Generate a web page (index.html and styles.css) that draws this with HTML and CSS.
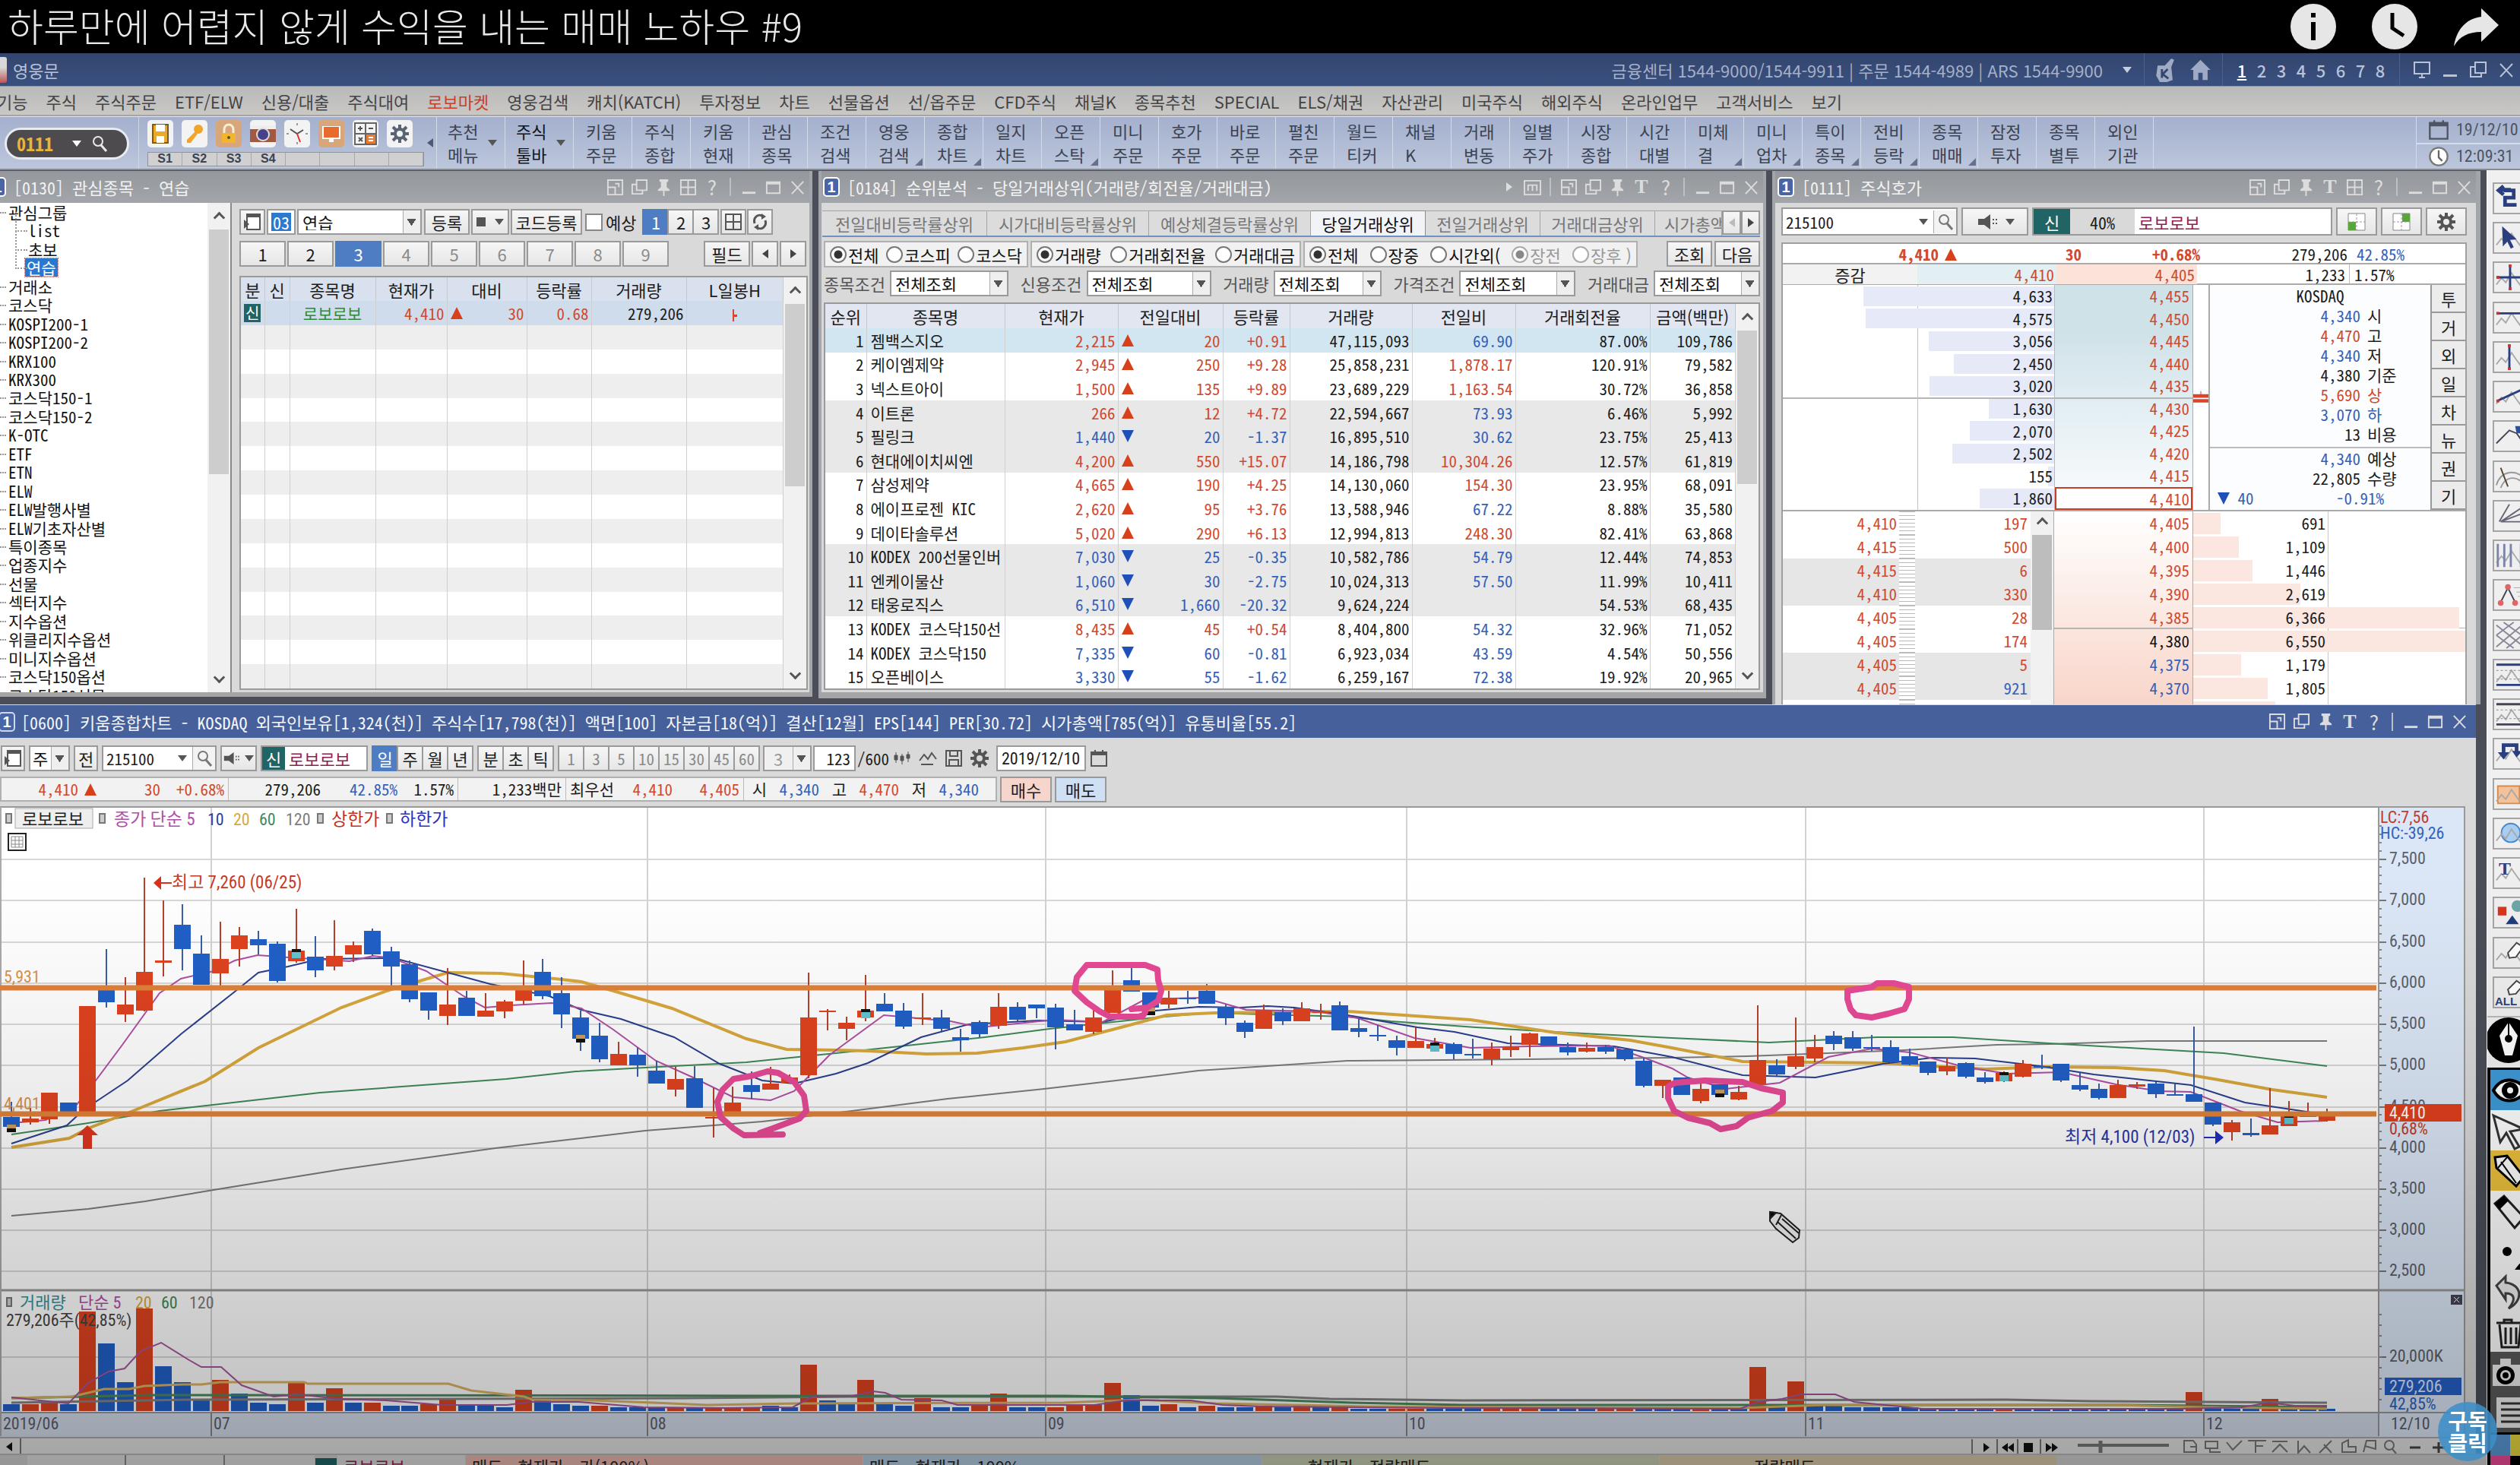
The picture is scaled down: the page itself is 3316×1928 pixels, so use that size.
FILE: index.html
```html
<!DOCTYPE html>
<html lang="ko">
<head>
<meta charset="utf-8">
<title>하루만에 어렵지 않게 수익을 내는 매매 노하우 #9</title>
<link rel="stylesheet" href="styles.css">
</head>
<body>
<svg class="defs" aria-hidden="true">
  <symbol id="dock" viewBox="0 0 24 24"><path d="M2 2h20v20H2zM2 12h10v10M12 7h5v5" fill="none" stroke="currentColor" stroke-width="2"/></symbol>
  <symbol id="copy" viewBox="0 0 24 24"><path d="M8 2h14v14H8zM8 8H2v13h14v-5" fill="none" stroke="currentColor" stroke-width="2"/></symbol>
  <symbol id="pin" viewBox="0 0 24 24"><path d="M6 1h12v3l-2 1v7l4 3v2H4v-2l4-3V5L6 4zM11 17h2v7h-2z" fill="currentColor"/></symbol>
  <symbol id="grid" viewBox="0 0 24 24"><path d="M2 2h20v20H2zM12 2v20M2 12h20" fill="none" stroke="currentColor" stroke-width="2"/></symbol>
  <symbol id="min" viewBox="0 0 24 24"><path d="M3 18h18v3H3z" fill="currentColor"/></symbol>
  <symbol id="max" viewBox="0 0 24 24"><path d="M3 5h18v15H3zM3 7h18" fill="none" stroke="currentColor" stroke-width="2"/></symbol>
  <symbol id="close" viewBox="0 0 24 24"><path d="M4 4l16 17M20 4L4 21" fill="none" stroke="currentColor" stroke-width="2"/></symbol>
  <symbol id="memo" viewBox="0 0 24 24"><path d="M1 3h22v19H1zM6 17V9h12v8M12 9v8" fill="none" stroke="currentColor" stroke-width="2"/></symbol>
  <symbol id="mag" viewBox="0 0 24 24"><circle cx="10" cy="9" r="6" fill="none" stroke="currentColor" stroke-width="2"/><path d="M14 14l7 8" stroke="currentColor" stroke-width="3"/></symbol>
  <symbol id="spk" viewBox="0 0 30 24"><path d="M1 8h8l8-6v20l-8-6H1z" fill="currentColor"/><path d="M20 8h2v2h-2zM24 8h2v2h-2zM20 13h2v2h-2zM24 13h2v2h-2z" fill="currentColor"/></symbol>
  <symbol id="gear" viewBox="0 0 24 24"><circle cx="12" cy="12" r="6" fill="none" stroke="currentColor" stroke-width="4"/><path d="M12 0v5M12 19v5M0 12h5M19 12h5M3 3l4 4M17 17l4 4M21 3l-4 4M7 17l-4 4" stroke="currentColor" stroke-width="4"/></symbol>
  <symbol id="panel" viewBox="0 0 24 24"><path d="M5 2h17v20H5z" fill="#fff" stroke="currentColor" stroke-width="2"/><path d="M5 2h17v4H5zM1 9l7 6-7 6z" fill="currentColor"/></symbol>
  <symbol id="cal" viewBox="0 0 24 24"><path d="M2 4h20v18H2z" fill="none" stroke="currentColor" stroke-width="2"/><path d="M2 4h20v4H2zM6 1h2v4H6zM16 1h2v4h-2z" fill="currentColor"/></symbol>
  <symbol id="wave" viewBox="0 0 40 40"><path d="M2 30l7-9 6 6 8-13 7 10 6 8 4-6" fill="none" stroke="#a9a9a9" stroke-width="2"/></symbol>
</svg>

<header class="video-head">
  <h1>하루만에 어렵지 않게 수익을 내는 매매 노하우 #9</h1>
  <nav class="video-actions" aria-label="동영상">
    <button aria-label="정보"><svg viewBox="0 0 60 60"><circle cx="30" cy="30" r="30" fill="#e6e6e6"/><path d="M27 12h6v6h-6zM27 24h6v24h-6z" fill="#000"/></svg></button>
    <button aria-label="나중에 볼 동영상"><svg viewBox="0 0 60 60"><circle cx="30" cy="30" r="30" fill="#e6e6e6"/><path d="M27 12v20l15 10" fill="none" stroke="#000" stroke-width="5"/></svg></button>
    <button aria-label="공유"><svg viewBox="0 0 60 60"><path d="M37 6l23 22-23 22V37C20 37 8 43 1 56 4 36 15 20 37 17z" fill="#e6e6e6"/></svg></button>
  </nav>
</header>

<div class="app-title">
  <span class="logo"></span><span class="name">영웅문</span>
  <div class="title-right">
    <span class="phones">금융센터 1544-9000/1544-9911 | 주문 1544-4989 | ARS 1544-9900</span>
    <i class="dn pale"></i>
    <span class="tgroup icons"><svg viewBox="0 0 30 36"><path d="M3 12h10l9-10 4 2-4 10 2 18-8 3H6L1 26z" fill="#9fabc4"/><path d="M9 17v12M17 17l-7 7 8 6" stroke="#33466f" stroke-width="3" fill="none"/></svg><svg viewBox="0 0 30 36"><path d="M15 4l14 14h-4v14h-7V22h-6v10H5V18H1z" fill="#9fabc4"/></svg></span>
    <span class="tgroup pages"><a href="#p1" class="on">1</a><a href="#p2">2</a><a href="#p3">3</a><a href="#p4">4</a><a href="#p5">5</a><a href="#p6">6</a><a href="#p7">7</a><a href="#p8">8</a></span>
    <span class="tgroup wins"><button aria-label="화면"><svg viewBox="0 0 24 24"><path d="M2 2h20v15H2zM8 22h8M12 17v5" fill="none" stroke="currentColor" stroke-width="2"/></svg></button><button aria-label="최소화"><svg><use href="#min"/></svg></button><button aria-label="복원"><svg><use href="#copy"/></svg></button><button aria-label="닫기"><svg><use href="#close"/></svg></button></span>
  </div>
</div>

<nav class="menu" aria-label="메뉴">
  <a href="#m">기능</a><a href="#m">주식</a><a href="#m">주식주문</a><a href="#m">ETF/ELW</a><a href="#m">신용/대출</a><a href="#m">주식대여</a><a href="#m" class="hot">로보마켓</a><a href="#m">영웅검색</a><a href="#m">캐치(KATCH)</a><a href="#m">투자정보</a><a href="#m">차트</a><a href="#m">선물옵션</a><a href="#m">선/옵주문</a><a href="#m">CFD주식</a><a href="#m">채널K</a><a href="#m">종목추천</a><a href="#m">SPECIAL</a><a href="#m">ELS/채권</a><a href="#m">자산관리</a><a href="#m">미국주식</a><a href="#m">해외주식</a><a href="#m">온라인업무</a><a href="#m">고객서비스</a><a href="#m">보기</a>
</nav>

<div class="tools">
  <div class="code-area"><div class="pill"><input aria-label="화면번호" value="0111"><i class="dn white"></i><button aria-label="찾기"><svg><use href="#mag"/></svg></button></div></div>
  <div class="quick">
    <div class="quick-icons">
      <button aria-label="저장"><svg viewBox="0 0 34 34"><path d="M7 5h20v24H7z" fill="#e9a92c" stroke="#7c5a18" stroke-width="2"/><path d="M11 5h12v9H11zM12 20h10v9H12z" fill="#fff"/></svg></button>
      <button aria-label="열쇠"><svg viewBox="0 0 34 34"><circle cx="22" cy="11" r="6" fill="#f0a42a"/><path d="M18 14l3 3-9 12H7v-4z" fill="#f0a42a"/></svg></button>
      <button aria-label="잠금" class="tan"><svg viewBox="0 0 34 34"><path d="M11 16v-5a6 6 0 0 1 12 0v5" fill="none" stroke="#f5f0d8" stroke-width="3"/><path d="M8 16h18v13H8z" fill="#f2b52c"/><circle cx="17" cy="22" r="2" fill="#553"/></svg></button>
      <button aria-label="화면 캡처"><svg viewBox="0 0 34 34"><path d="M0 6h34v22H0z" fill="#a05a44"/><path d="M0 6h34v5H0z" fill="#eee"/><circle cx="17" cy="18" r="9" fill="#ddd"/><circle cx="17" cy="18" r="7" fill="#46428a"/></svg></button>
      <button aria-label="시간"><svg viewBox="0 0 34 34"><path d="M8 11l9 6 8-5" stroke="#555" stroke-width="2" fill="none"/><path d="M17 17l4 11" stroke="#d33" stroke-width="2"/><path d="M17 3v3M17 28v3M3 17h3M28 17h3" stroke="#999" stroke-width="2"/></svg></button>
      <button aria-label="모니터" class="tan"><svg viewBox="0 0 34 34"><path d="M5 7h24v17H5z" fill="#fff"/><path d="M7 8h20v14H7z" fill="#e86a2c"/><path d="M14 24h6v4h-6z" fill="#fff"/></svg></button>
      <button aria-label="계산기"><svg viewBox="0 0 34 34"><path d="M2 2h30v30H2z" fill="#666"/><path d="M4 4h12v12H4zM18 4h12v12H18zM4 18h12v12H4z" fill="#f4f4f4"/><path d="M18 18h12v12H18z" fill="#e87a35"/><path d="M7 10h6M10 7v6M21 10h6M8 22l5 5M13 22l-5 5" stroke="#555" stroke-width="2"/><path d="M21 22h6M21 26h6" stroke="#fff" stroke-width="2"/></svg></button>
      <button aria-label="설정"><svg class="cog"><use href="#gear"/></svg></button>
    </div>
    <div class="slots"><span>S1</span><span>S2</span><span>S3</span><span>S4</span><span></span><span></span><span></span><span></span></div>
  </div>
  <i class="lf"></i>
  <button class="tool wide">추천<br>메뉴<i class="dn"></i></button><button class="tool wide dark">주식<br>툴바<i class="dn"></i></button><button class="tool">키움<br>주문</button><button class="tool">주식<br>종합</button><button class="tool">키움<br>현재</button><button class="tool">관심<br>종목</button><button class="tool">조건<br>검색</button><button class="tool more">영웅<br>검색</button><button class="tool more">종합<br>차트</button><button class="tool">일지<br>차트</button><button class="tool more">오픈<br>스탁</button><button class="tool">미니<br>주문</button><button class="tool">호가<br>주문</button><button class="tool">바로<br>주문</button><button class="tool">펼친<br>주문</button><button class="tool">월드<br>티커</button><button class="tool">채널<br>K</button><button class="tool">거래<br>변동</button><button class="tool">일별<br>주가</button><button class="tool">시장<br>종합</button><button class="tool">시간<br>대별</button><button class="tool more">미체<br>결</button><button class="tool more">미니<br>업차</button><button class="tool more">특이<br>종목</button><button class="tool more">전비<br>등락</button><button class="tool more">종목<br>매매</button><button class="tool">잠정<br>투자</button><button class="tool">종목<br>별투</button><button class="tool">외인<br>기관</button>
  <div class="clock"><div><svg><use href="#cal"/></svg>19/12/10</div><div><svg viewBox="0 0 24 24"><circle cx="12" cy="12" r="10" fill="#fff" stroke="#777" stroke-width="2"/><path d="M12 5v8l4 4" fill="none" stroke="#666" stroke-width="2"/></svg>12:09:31</div></div>
</div>

<div class="workspace">
<main class="mdi">
 <div class="top-windows">
  <section class="win w1">
    <header class="wt"><b class="num">1</b><h2>[0130] 관심종목 - 연습</h2><div class="ctl"><button aria-label="도킹"><svg><use href="#dock"/></svg></button><button aria-label="복사"><svg><use href="#copy"/></svg></button><button aria-label="고정"><svg><use href="#pin"/></svg></button><button aria-label="분할"><svg><use href="#grid"/></svg></button><button>?</button><i></i><button aria-label="최소화"><svg><use href="#min"/></svg></button><button aria-label="최대화"><svg><use href="#max"/></svg></button><button aria-label="닫기"><svg><use href="#close"/></svg></button></div></header>
    <div class="w1-body">
      <div class="tree-wrap">
        <ul class="tree"><li>관심그룹</li><li class="sub">list</li><li class="sub">초보</li><li class="sub"><mark>연습</mark></li><li>거래소</li><li>코스닥</li><li>KOSPI200-1</li><li>KOSPI200-2</li><li>KRX100</li><li>KRX300</li><li>코스닥150-1</li><li>코스닥150-2</li><li>K-OTC</li><li>ETF</li><li>ETN</li><li>ELW</li><li>ELW발행사별</li><li>ELW기초자산별</li><li>특이종목</li><li>업종지수</li><li>선물</li><li>섹터지수</li><li>지수옵션</li><li>위클리지수옵션</li><li>미니지수옵션</li><li>코스닥150옵션</li><li>코스닥150선물</li></ul>
        <div class="sb"><i class="cu"></i><span class="thumb t-tree"></span><i class="cd"></i></div>
      </div>
      <div class="w1-main">
        <div class="bar">
          <button class="b w34" aria-label="목록"><svg><use href="#panel"/></svg></button>
          <input class="code03" aria-label="그룹 번호" value="03">
          <select class="sel w164" aria-label="관심그룹"><option>연습</option></select>
          <button class="b w60">등록</button><button class="b w50"><i class="sq"></i><i class="dn"></i></button><button class="b w94">코드등록</button>
          <label class="chk"><input type="checkbox">예상</label>
          <div class="seg"><button class="b on">1</button><button class="b">2</button><button class="b">3</button></div>
          <button class="b w34" aria-label="표"><svg><use href="#grid"/></svg></button><button class="b w34 nogap" aria-label="새로고침"><svg viewBox="0 0 24 24"><path d="M5 14a7 8 0 0 1 11-9M19 10a7 8 0 0 1-11 9" fill="none" stroke="currentColor" stroke-width="3"/><path d="M14 1l6 4-6 4zM10 15l-6 4 6 4z" fill="currentColor"/></svg></button>
        </div>
        <div class="bar nums"><button class="b">1</button><button class="b">2</button><button class="b on">3</button><button class="b off">4</button><button class="b off">5</button><button class="b off">6</button><button class="b off">7</button><button class="b off">8</button><button class="b off">9</button><button class="b field">필드</button><button class="b w34" aria-label="이전"><i class="lf"></i></button><button class="b w34" aria-label="다음"><i class="rt"></i></button></div>
        <div class="tbl-wrap">
          <table class="t1"><colgroup><col class="c31"><col class="c33"><col class="c113"><col class="c94"><col class="c105"><col class="c85"><col class="c125"><col></colgroup>
          <thead><tr><th>분</th><th>신</th><th>종목명</th><th>현재가</th><th>대비</th><th>등락률</th><th>거래량</th><th>L일봉H</th></tr></thead>
          <tbody><tr class="cur"><td class="c"><b class="sin">신</b></td><td></td><td class="c green">로보로보</td><td class="up">4,410</td><td class="up"><i class="tu"></i>30</td><td class="up">0.68</td><td>279,206</td><td class="c up"><i class="mini"></i></td></tr>
          <tr><td></td><td></td><td></td><td></td><td></td><td></td><td></td><td></td></tr><tr><td></td><td></td><td></td><td></td><td></td><td></td><td></td><td></td></tr><tr><td></td><td></td><td></td><td></td><td></td><td></td><td></td><td></td></tr><tr><td></td><td></td><td></td><td></td><td></td><td></td><td></td><td></td></tr><tr><td></td><td></td><td></td><td></td><td></td><td></td><td></td><td></td></tr><tr><td></td><td></td><td></td><td></td><td></td><td></td><td></td><td></td></tr><tr><td></td><td></td><td></td><td></td><td></td><td></td><td></td><td></td></tr><tr><td></td><td></td><td></td><td></td><td></td><td></td><td></td><td></td></tr><tr><td></td><td></td><td></td><td></td><td></td><td></td><td></td><td></td></tr><tr><td></td><td></td><td></td><td></td><td></td><td></td><td></td><td></td></tr><tr><td></td><td></td><td></td><td></td><td></td><td></td><td></td><td></td></tr><tr><td></td><td></td><td></td><td></td><td></td><td></td><td></td><td></td></tr><tr><td></td><td></td><td></td><td></td><td></td><td></td><td></td><td></td></tr><tr><td></td><td></td><td></td><td></td><td></td><td></td><td></td><td></td></tr><tr><td></td><td></td><td></td><td></td><td></td><td></td><td></td><td></td></tr></tbody></table>
          <div class="sb"><i class="cu"></i><span class="thumb t-w1"></span><i class="cd"></i></div>
        </div>
      </div>
    </div>
  </section>

  <section class="win w2">
    <header class="wt"><b class="num">1</b><h2>[0184] 순위분석 - 당일거래상위(거래량/회전율/거래대금)</h2><div class="ctl"><i class="rt pale"></i><button aria-label="메모"><svg><use href="#memo"/></svg></button><i></i><button aria-label="도킹"><svg><use href="#dock"/></svg></button><button aria-label="복사"><svg><use href="#copy"/></svg></button><button aria-label="고정"><svg><use href="#pin"/></svg></button><button class="serif">T</button><button>?</button><i></i><button aria-label="최소화"><svg><use href="#min"/></svg></button><button aria-label="최대화"><svg><use href="#max"/></svg></button><button aria-label="닫기"><svg><use href="#close"/></svg></button></div></header>
    <div class="w2-body">
      <div class="tabs"><button class="tab">전일대비등락률상위</button><button class="tab">시가대비등락률상위</button><button class="tab">예상체결등락률상위</button><button class="tab on">당일거래상위</button><button class="tab">전일거래상위</button><button class="tab">거래대금상위</button><button class="tab last">시가총액</button><button class="b w25" aria-label="이전 탭"><i class="lf faint"></i></button><button class="b w25" aria-label="다음 탭"><i class="rt"></i></button></div>
      <div class="radios">
        <fieldset class="f269"><label><input type="radio" name="m" checked>전체</label><label><input type="radio" name="m">코스피</label><label><input type="radio" name="m">코스닥</label></fieldset>
        <fieldset class="f356"><label><input type="radio" name="k" checked>거래량</label><label><input type="radio" name="k">거래회전율</label><label><input type="radio" name="k">거래대금</label></fieldset>
        <fieldset class="f440"><label><input type="radio" name="s" checked>전체</label><label><input type="radio" name="s">장중</label><label><input type="radio" name="s">시간외(</label><label class="dis"><input type="radio" name="x" checked disabled>장전</label><label class="dis"><input type="radio" name="x" disabled>장후 )</label></fieldset>
        <button class="b w60 push">조회</button><button class="b w60">다음</button>
      </div>
      <div class="filters"><label>종목조건<select class="sel w156"><option>전체조회</option></select></label><label>신용조건<select class="sel w164"><option>전체조회</option></select></label><label>거래량<select class="sel w142"><option>전체조회</option></select></label><label>가격조건<select class="sel w153"><option>전체조회</option></select></label><label>거래대금<select class="sel w140"><option>전체조회</option></select></label></div>
      <div class="tbl-wrap t2w">
        <table class="t2"><colgroup><col class="c54"><col class="c182"><col class="c149"><col class="c138"><col class="c88"><col class="c161"><col class="c136"><col class="c177"><col></colgroup>
        <thead><tr><th>순위</th><th>종목명</th><th>현재가</th><th>전일대비</th><th>등락률</th><th>거래량</th><th>전일비</th><th>거래회전율</th><th>금액(백만)</th></tr></thead>
        <tbody>
        <tr class="cur"><td>1</td><td>젬백스지오</td><td class="up">2,215</td><td class="up"><i class="tu"></i>20</td><td class="up">+0.91</td><td>47,115,093</td><td class="dw">69.90</td><td>87.00%</td><td>109,786</td></tr>
        <tr><td>2</td><td>케이엠제약</td><td class="up">2,945</td><td class="up"><i class="tu"></i>250</td><td class="up">+9.28</td><td>25,858,231</td><td class="up">1,878.17</td><td>120.91%</td><td>79,582</td></tr>
        <tr><td>3</td><td>넥스트아이</td><td class="up">1,500</td><td class="up"><i class="tu"></i>135</td><td class="up">+9.89</td><td>23,689,229</td><td class="up">1,163.54</td><td>30.72%</td><td>36,858</td></tr>
        <tr class="g"><td>4</td><td>이트론</td><td class="up">266</td><td class="up"><i class="tu"></i>12</td><td class="up">+4.72</td><td>22,594,667</td><td class="dw">73.93</td><td>6.46%</td><td>5,992</td></tr>
        <tr class="g"><td>5</td><td>필링크</td><td class="dw">1,440</td><td class="dw"><i class="td"></i>20</td><td class="dw">-1.37</td><td>16,895,510</td><td class="dw">30.62</td><td>23.75%</td><td>25,413</td></tr>
        <tr class="g"><td>6</td><td>현대에이치씨엔</td><td class="up">4,200</td><td class="up"><i class="tu"></i>550</td><td class="up">+15.07</td><td>14,186,798</td><td class="up">10,304.26</td><td>12.57%</td><td>61,819</td></tr>
        <tr><td>7</td><td>삼성제약</td><td class="up">4,665</td><td class="up"><i class="tu"></i>190</td><td class="up">+4.25</td><td>14,130,060</td><td class="up">154.30</td><td>23.95%</td><td>68,091</td></tr>
        <tr><td>8</td><td>에이프로젠 KIC</td><td class="up">2,620</td><td class="up"><i class="tu"></i>95</td><td class="up">+3.76</td><td>13,588,946</td><td class="dw">67.22</td><td>8.88%</td><td>35,580</td></tr>
        <tr><td>9</td><td>데이타솔루션</td><td class="up">5,020</td><td class="up"><i class="tu"></i>290</td><td class="up">+6.13</td><td>12,994,813</td><td class="up">248.30</td><td>82.41%</td><td>63,868</td></tr>
        <tr class="g"><td>10</td><td>KODEX 200선물인버</td><td class="dw">7,030</td><td class="dw"><i class="td"></i>25</td><td class="dw">-0.35</td><td>10,582,786</td><td class="dw">54.79</td><td>12.44%</td><td>74,853</td></tr>
        <tr class="g"><td>11</td><td>엔케이물산</td><td class="dw">1,060</td><td class="dw"><i class="td"></i>30</td><td class="dw">-2.75</td><td>10,024,313</td><td class="dw">57.50</td><td>11.99%</td><td>10,411</td></tr>
        <tr class="g"><td>12</td><td>태웅로직스</td><td class="dw">6,510</td><td class="dw"><i class="td"></i>1,660</td><td class="dw">-20.32</td><td>9,624,224</td><td></td><td>54.53%</td><td>68,435</td></tr>
        <tr><td>13</td><td>KODEX 코스닥150선</td><td class="up">8,435</td><td class="up"><i class="tu"></i>45</td><td class="up">+0.54</td><td>8,404,800</td><td class="dw">54.32</td><td>32.96%</td><td>71,052</td></tr>
        <tr><td>14</td><td>KODEX 코스닥150</td><td class="dw">7,335</td><td class="dw"><i class="td"></i>60</td><td class="dw">-0.81</td><td>6,923,034</td><td class="dw">43.59</td><td>4.54%</td><td>50,556</td></tr>
        <tr><td>15</td><td>오픈베이스</td><td class="dw">3,330</td><td class="dw"><i class="td"></i>55</td><td class="dw">-1.62</td><td>6,259,167</td><td class="dw">72.38</td><td>19.92%</td><td>20,965</td></tr>
        </tbody></table>
        <div class="sb"><i class="cu"></i><span class="thumb t-w2"></span><i class="cd"></i></div>
      </div>
    </div>
  </section>

  <section class="win w3">
    <header class="wt"><b class="num">1</b><h2>[0111] 주식호가</h2><div class="ctl"><button aria-label="도킹"><svg><use href="#dock"/></svg></button><button aria-label="복사"><svg><use href="#copy"/></svg></button><button aria-label="고정"><svg><use href="#pin"/></svg></button><button class="serif">T</button><button aria-label="분할"><svg><use href="#grid"/></svg></button><button>?</button><i></i><button aria-label="최소화"><svg><use href="#min"/></svg></button><button aria-label="최대화"><svg><use href="#max"/></svg></button><button aria-label="닫기"><svg><use href="#close"/></svg></button></div></header>
    <div class="w3-body">
      <div class="bar">
        <div class="combo w232"><input aria-label="종목코드" value="215100"><i class="dn"></i><button aria-label="종목 찾기"><svg><use href="#mag"/></svg></button></div>
        <button class="b w88" aria-label="소리"><svg class="spk"><use href="#spk"/></svg><i class="dn"></i></button>
        <div class="stock"><b class="sin">신</b><span class="pct">40%</span><span class="nm">로보로보</span></div>
        <button class="b w54" aria-label="매도 배치"><svg viewBox="0 0 24 24"><path d="M1 1h22v22H1z" fill="#fff" stroke="#888"/><path d="M1 12h10v11H1z" fill="#5aa63a"/><path d="M12 1v22M1 12h22" stroke="#999" stroke-dasharray="3 2"/></svg></button><button class="b w54" aria-label="매수 배치"><svg viewBox="0 0 24 24"><path d="M1 1h22v22H1z" fill="#fff" stroke="#888"/><path d="M13 1h10v11H13z" fill="#5aa63a"/><path d="M12 1v22M1 12h22" stroke="#999" stroke-dasharray="3 2"/></svg></button><button class="b w54" aria-label="설정"><svg><use href="#gear"/></svg></button>
      </div>
      <div class="quote">
        <div class="q1"><b class="up r">4,410<i class="tu in"></i></b><b class="up r">30</b><b class="up r">+0.68%</b><span class="r">279,206</span><span class="dw l">42.85%</span></div>
        <div class="q2"><span class="chg">증감</span><span class="up r ask">4,410</span><span class="up r bid">4,405</span><span class="r">1,233</span><span class="l">1.57%</span></div>
        <div class="asks">
          <div class="ask-q"><span style="--w:251px">4,633</span><span style="--w:248px">4,575</span><span style="--w:165px">3,056</span><span style="--w:132px">2,450</span><span style="--w:164px">3,020</span><span style="--w:86px">1,630</span><span style="--w:111px">2,070</span><span style="--w:134px">2,502</span><span style="--w:8px">155</span><span style="--w:98px">1,860</span></div>
          <div class="ask-p"><span>4,455</span><span>4,450</span><span>4,445</span><span>4,440</span><span>4,435</span><span>4,430</span><span>4,425</span><span>4,420</span><span>4,415</span><span class="now">4,410</span></div>
          <div class="day"><svg viewBox="0 0 22 297"><path d="M11 140v6" stroke="#b33"/><path d="M0 147h22M0 154h22" stroke="#d8452a" stroke-width="5"/></svg></div>
          <dl class="facts"><dt class="mk">KOSDAQ</dt><dd class="dw">4,340</dd><dt>시</dt><dd class="up">4,470</dd><dt>고</dt><dd class="dw">4,340</dd><dt>저</dt><dd>4,380</dd><dt>기준</dt><dd class="up">5,690</dd><dt class="up">상</dt><dd class="dw">3,070</dd><dt class="dw">하</dt><dd>13</dd><dt>비용</dt><dd class="dw sep">4,340</dd><dt class="sep">예상</dt><dd>22,805</dd><dt>수량</dt><dd class="dw diff"><span><i class="td"></i> 40</span><span>-0.91%</span></dd></dl>
          <div class="side"><button>투</button><button>거</button><button>외</button><button>일</button><button>차</button><button>뉴</button><button>권</button><button>기</button></div>
        </div>
        <div class="bids">
          <div class="ticks"><div><span>4,410</span><span>197</span></div><div><span>4,415</span><span>500</span></div><div class="g"><span>4,415</span><span>6</span></div><div class="g"><span>4,410</span><span>330</span></div><div><span>4,405</span><span>28</span></div><div><span>4,405</span><span>174</span></div><div class="g"><span>4,405</span><span>5</span></div><div class="g"><span>4,405</span><span class="dw">921</span></div><div><span>4,410</span><span>10</span></div></div>
          <div class="sb"><i class="cu"></i><span class="thumb t-w3"></span></div>
          <div class="bid-p"><span>4,405</span><span>4,400</span><span>4,395</span><span>4,390</span><span>4,385</span><span class="k">4,380</span><span class="dw">4,375</span><span class="dw">4,370</span><span class="dw"></span></div>
          <div class="bid-q"><span style="--w:36px">691</span><span style="--w:60px">1,109</span><span style="--w:78px">1,446</span><span style="--w:141px">2,619</span><span style="--w:350px">6,366</span><span style="--w:359px">6,550</span><span style="--w:63px">1,179</span><span style="--w:98px">1,805</span><span style="--w:108px"></span></div>
        </div>
      </div>
    </div>
  </section>
 </div>

 <section class="win chart">
  <header class="wt"><b class="num">1</b><h2>[0600] 키움종합차트 - KOSDAQ 외국인보유[1,324(천)] 주식수[17,798(천)] 액면[100] 자본금[18(억)] 결산[12월] EPS[144] PER[30.72] 시가총액[785(억)] 유통비율[55.2]</h2><div class="ctl"><button aria-label="도킹"><svg><use href="#dock"/></svg></button><button aria-label="복사"><svg><use href="#copy"/></svg></button><button aria-label="고정"><svg><use href="#pin"/></svg></button><button class="serif">T</button><button>?</button><i></i><button aria-label="최소화"><svg><use href="#min"/></svg></button><button aria-label="최대화"><svg><use href="#max"/></svg></button><button aria-label="닫기"><svg><use href="#close"/></svg></button></div></header>
  <div class="chart-body">
   <div class="bar">
    <button class="b w32" aria-label="목록"><svg><use href="#panel"/></svg></button>
    <select class="sel w54" aria-label="구분"><option>주</option></select>
    <button class="b w32">전</button>
    <div class="combo w151"><input aria-label="종목코드" value="215100"><i class="dn"></i><button aria-label="종목 찾기"><svg><use href="#mag"/></svg></button></div>
    <button class="b w48" aria-label="소리"><svg><use href="#spk"/></svg><i class="dn"></i></button>
    <div class="stock small"><b class="sin">신</b><span class="nm">로보로보</span></div>
    <div class="seg"><button class="b on">일</button><button class="b">주</button><button class="b">월</button><button class="b">년</button></div>
    <div class="seg"><button class="b">분</button><button class="b">초</button><button class="b">틱</button></div>
    <div class="seg offs"><button class="b">1</button><button class="b">3</button><button class="b">5</button><button class="b">10</button><button class="b">15</button><button class="b">30</button><button class="b">45</button><button class="b">60</button></div>
    <select class="sel w64 off" aria-label="간격" disabled><option>3</option></select>
    <label class="count"><input value="123" aria-label="봉 개수">/600</label>
    <button class="plain" aria-label="봉차트"><svg viewBox="0 0 24 24"><path d="M4 4v14M2 8h4v6H2zM12 6v14M10 9h4v6h-4zM20 3v14M18 7h4v5h-4z" fill="#555" stroke="#555"/></svg></button><button class="plain" aria-label="선차트"><svg viewBox="0 0 24 24"><path d="M1 15l6-8 5 6 5-8 6 8M3 20h16" fill="none" stroke="#555" stroke-width="2"/></svg></button><button class="plain" aria-label="저장"><svg viewBox="0 0 24 24"><path d="M2 2h20v20H2zM7 2v7h10V2M6 22v-8h12v8" fill="none" stroke="#555" stroke-width="2"/></svg></button><button class="plain" aria-label="설정"><svg><use href="#gear"/></svg></button>
    <input class="date" aria-label="날짜" value="2019/12/10"><button class="plain" aria-label="달력"><svg><use href="#cal"/></svg></button>
   </div>
   <div class="info">
    <div class="info-box"><span class="up i130">4,410<i class="tu in"></i></span><span class="up i84">30</span><span class="up i84">+0.68%</span><span class="i127 ln">279,206</span><span class="dw i101">42.85%</span><span class="i74">1.57%</span><span class="i142 ln">1,233백만</span><span class="i70 ln">최우선</span><span class="up i77">4,410</span><span class="up i88">4,405</span><span class="i36 ln">시</span><span class="dw i70">4,340</span><span class="i36">고</span><span class="up i70">4,470</span><span class="i36">저</span><span class="dw i70">4,340</span></div>
    <button class="b buy">매수</button><button class="b sell">매도</button>
   </div>
   <svg id="plot" viewBox="0 1061 3244 830" role="img" aria-label="로보로보 일봉 차트"></svg>
   <div class="scroll"><i class="lf blk"></i><span class="track"></span>
     <svg viewBox="0 0 660 22"><path d="M11 1v20M44 1v20M71 1v20M101 1v20" stroke="#777" stroke-width="2"/><path d="M26 6l8 6-8 6zM58 6l-8 6 8 6zM66 6l-8 6 8 6zM79 6h12v12H79zM108 6l8 6-8 6zM116 6l8 6-8 6z" fill="#111"/><path d="M150 9h120" stroke="#777" stroke-width="4"/><path d="M180 3v16" stroke="#777" stroke-width="5"/><g fill="none" stroke="#777" stroke-width="2"><path d="M290 18V3h12l4 5v10zM298 11h8M318 4h16v9h-16zM324 13v5h14M346 5l8 10 12-12M374 3h24M384 3v16M384 10h10M406 4h20M406 18l10-10 10 10M440 3v16l8-9 8 9M468 19l16-16M474 8l10 11M498 18V6l8-4v9h10v7zM526 18l4-15h12v11l-14-4"/><circle cx="560" cy="9" r="6"/><path d="M564 14l5 6"/></g><path d="M587 12h14M617 12h16M625 5v14" stroke="#444" stroke-width="3"/></svg>
   </div>
  </div>
 </section>
 <div class="dockbar"><span class="d-ctl"></span><b class="sin"></b><span class="d-name">로보로보</span><span class="d-red">매도 - 현재가 - 가(100%)</span><span class="d-blue">매도 - 현재가 - 100%</span><span class="d-green">현재가 - 전량매도</span><span class="d-tan">전량매도</span></div>
</main>

<aside class="palette" aria-label="그리기 도구">
 <div class="draw">
  <button aria-label="연결"><svg viewBox="0 0 40 40"><path d="M22 8H8M12 3L5 9l7 6M12 9h14v10H14v10h16" fill="none" stroke="#2a3f80" stroke-width="5"/></svg></button>
  <button aria-label="선택"><svg><use href="#wave"/></svg><svg viewBox="0 0 40 40"><path d="M10 4l20 18-9 1 5 10-4 2-5-10-6 7z" fill="#2a3f80"/></svg></button>
  <button aria-label="십자선"><svg><use href="#wave"/></svg><svg viewBox="0 0 40 40"><path d="M3 20h37M21 3v34" stroke="#2a3f80" stroke-width="3"/><path d="M2 18h4v4H2zM19 2h4v4h-4zM19 34h4v4h-4z" fill="#c33"/></svg></button>
  <button aria-label="수평선"><svg><use href="#wave"/></svg><svg viewBox="0 0 40 40"><path d="M3 14h37" stroke="#2a3f80" stroke-width="3"/><path d="M2 12h4v4H2z" fill="#c33"/></svg></button>
  <button aria-label="수직선"><svg><use href="#wave"/></svg><svg viewBox="0 0 40 40"><path d="M20 3v34" stroke="#2a3f80" stroke-width="3"/><path d="M18 2h4v4h-4zM18 34h4v4h-4z" fill="#c33"/></svg></button>
  <button aria-label="추세선"><svg><use href="#wave"/></svg><svg viewBox="0 0 40 40"><path d="M3 26L38 10" stroke="#2a3f80" stroke-width="3"/><path d="M2 24h4v4H2z" fill="#c33"/></svg></button>
  <button aria-label="자유선"><svg viewBox="0 0 40 40"><path d="M2 30L20 12l10 4 10 14" fill="none" stroke="#445" stroke-width="2"/><path d="M28 6h12v10H30z" fill="#2a4fa0"/></svg></button>
  <button aria-label="원호"><svg viewBox="0 0 40 40"><path d="M2 32c6-20 26-22 38-10M8 36c6-16 20-18 32-6" fill="none" stroke="#999" stroke-width="2"/><path d="M8 8l10 26" stroke="#543" stroke-width="2"/></svg></button>
  <button aria-label="부채꼴"><svg viewBox="0 0 40 40"><path d="M6 28L20 4M8 28L38 8M8 28L40 16M8 28h32" stroke="#667" stroke-width="2"/></svg></button>
  <button aria-label="시간대"><svg><use href="#wave"/></svg><svg viewBox="0 0 40 40"><path d="M4 4v32M13 4v32M22 4v32M36 4v32" stroke="#7c84a8" stroke-width="3"/></svg></button>
  <button aria-label="파동"><svg viewBox="0 0 40 40"><path d="M8 30L18 10l10 20" fill="none" stroke="#445" stroke-width="2"/><path d="M26 10h14M30 16h10M32 22h8" stroke="#aaa"/><g fill="#d66"><circle cx="8" cy="31" r="4"/><circle cx="18" cy="9" r="4"/><circle cx="28" cy="31" r="4"/></g></svg></button>
  <button aria-label="격자"><svg viewBox="0 0 40 40"><path d="M2 6l38 30M2 20l24 18M12 2l28 20M2 36L40 4M2 20L26 2M16 38l24-20" stroke="#889" stroke-width="2"/></svg></button>
  <button aria-label="구간"><svg><use href="#wave"/></svg><svg viewBox="0 0 40 40"><path d="M2 6h38M2 34h38" stroke="#2a3f80" stroke-width="3"/><path d="M2 14h38M2 26h38" stroke="#888" stroke-dasharray="3 3"/></svg></button>
  <button aria-label="사분할"><svg><use href="#wave"/></svg><svg viewBox="0 0 40 40"><path d="M2 6h38M2 34h38" stroke="#445" stroke-width="3"/><path d="M2 14h38M2 26h38" stroke="#888" stroke-dasharray="3 3"/></svg></button>
  <button aria-label="되돌림"><svg><use href="#wave"/></svg><svg viewBox="0 0 40 40"><path d="M12 24V8h18v12" fill="none" stroke="#2a3f80" stroke-width="5"/><path d="M4 18h16l-8 10zM24 16h14l-8 9z" fill="#2a3f80"/></svg></button>
  <button aria-label="사각형"><svg viewBox="0 0 40 40"><path d="M4 9h30v24H4z" fill="#f3c29b" stroke="#d98a4a" stroke-width="2"/></svg><svg><use href="#wave"/></svg></button>
  <button aria-label="원"><svg viewBox="0 0 40 40"><circle cx="22" cy="19" r="13" fill="#a9cdf0" stroke="#4a86c8" stroke-width="2"/></svg><svg><use href="#wave"/></svg></button>
  <button aria-label="글자"><svg><use href="#wave"/></svg><span>T</span></button>
  <button aria-label="도형"><svg viewBox="0 0 40 40"><path d="M4 12h12v12H4z" fill="#d8351c"/><circle cx="31" cy="11" r="8" fill="#6ba5a5"/><path d="M24 24l9 12H15z" fill="#1e3c80"/></svg></button>
  <button aria-label="지우개"><svg><use href="#wave"/></svg><svg viewBox="0 0 40 40"><path d="M18 20L30 6l9 6-10 14-9 1z" fill="#fff" stroke="#444" stroke-width="2"/></svg></button>
  <button aria-label="모두 지우기"><svg viewBox="0 0 40 40"><path d="M18 16L30 4l9 6-10 12-9 1z" fill="#fff" stroke="#444" stroke-width="2"/></svg><small>ALL</small></button>
 </div>
 <div class="pen"><svg viewBox="0 0 60 60"><circle cx="30" cy="30" r="30" fill="#000"/><path d="M30 6l12 18-7 26H25l-7-26z" fill="#fff"/><circle cx="30" cy="28" r="5" fill="#000"/><path d="M30 6v20" stroke="#000" stroke-width="2"/></svg></div>
 <div class="marker">
  <button class="blue" aria-label="보기"><svg viewBox="0 0 40 52"><path d="M4 26c10-18 30-18 44 0-14 18-34 18-44 0z" fill="#fff" stroke="#000" stroke-width="4"/><circle cx="26" cy="26" r="11"/><circle cx="26" cy="26" r="4" fill="#fff"/></svg></button>
  <button aria-label="커서"><svg viewBox="0 0 40 52"><path d="M4 6l40 18-18 3 12 20-6 3-11-21-8 12z" fill="#fff" stroke="#333" stroke-width="3"/></svg></button>
  <button class="gold" aria-label="연필"><svg viewBox="0 0 40 52"><path d="M6 8l16-2 22 28-10 12L8 22z" fill="#fff" stroke="#000" stroke-width="3"/><path d="M14 14l20 28M22 8L10 22" stroke="#000" stroke-width="2"/></svg></button>
  <button aria-label="지우개"><svg viewBox="0 0 40 52"><path d="M6 16L18 6l26 28-12 14z" fill="#fff" stroke="#222" stroke-width="3"/><path d="M6 16L18 6l6 6-12 12z"/></svg></button>
  <button aria-label="굵기"><svg viewBox="0 0 40 52"><circle cx="22" cy="26" r="6"/><path d="M40 40v10H32z"/></svg></button>
  <button aria-label="실행 취소"><svg viewBox="0 0 40 52"><path d="M8 18L20 6v8c22 2 24 24 4 34 10-12 8-20-4-20v8z" fill="#eee" stroke="#444" stroke-width="3"/></svg></button>
  <button aria-label="휴지통"><svg viewBox="0 0 40 52"><path d="M8 14h36M18 14v-4h10v4M12 16l3 30h22l3-30M20 20v22M27 20v22M34 20v22" fill="none" stroke="#222" stroke-width="3"/></svg></button>
  <button class="ink" aria-label="사진"><svg viewBox="0 0 40 52"><path d="M3 16h10V8h14v8h20v28H3z" fill="#eee"/><circle cx="20" cy="30" r="12"/><circle cx="20" cy="30" r="7" fill="#eee"/><circle cx="20" cy="30" r="4"/></svg></button>
  <button class="ink" aria-label="목록"><svg viewBox="0 0 40 52"><path d="M8 6h36v40H8z" fill="#eee"/><path d="M14 14h26M14 22h26M14 30h26M14 38h26" stroke="#333" stroke-width="3"/></svg></button>
  <div class="swatches"><i></i><i></i><i></i><i></i></div>
 </div>
</aside>
</div>

<div class="shade"></div>
<a class="subscribe" href="#subscribe">구독<br>클릭</a>
<script src="chart.js"></script>
</body>
</html>
```
FILE: styles.css
```css
*{box-sizing:border-box}
:root{--ui:"Noto Sans CJK KR",sans-serif;--mono:"Noto Sans Mono CJK KR","Noto Sans CJK KR",monospace;--cond:"Roboto Condensed","Noto Sans CJK KR",sans-serif;--red:#cf4a30;--blue:#3560b8;--line:#9a9a9a}
html,body{margin:0;height:100vh;overflow:hidden}
body{display:flex;flex-direction:column;background:#4b4e58;font:22px/1 var(--ui);color:#1c1c1c;position:relative}
h1,h2,ul,dl,dd,dt{margin:0;padding:0;font:inherit}
button,input,select{font:inherit;color:inherit;margin:0;padding:0;border:0;background:none;border-radius:0}
a{color:inherit;text-decoration:none}
svg{display:block;flex:none}
.defs{position:absolute;width:0;height:0}

.video-head{height:70px;flex:none;background:#000;color:#e9e9e9;display:flex;align-items:center;justify-content:space-between;padding:0 28px 0 10px}
.video-head h1{font-size:51px;line-height:62px;font-weight:300;white-space:nowrap;padding-bottom:4px}
.video-actions{display:flex;gap:47px}
.video-actions svg{width:60px;height:60px}

.app-title{height:44px;flex:none;display:flex;align-items:center;background:linear-gradient(#33456d,#39507f);color:#b9c3d8;border-bottom:1px solid #8a93a8}
.logo{width:9px;height:34px;background:linear-gradient(#d8d8d8 40%,#b55);border-radius:0 3px 3px 0;margin-right:8px}
.title-right{margin-left:auto;display:flex;align-items:center;height:100%;white-space:nowrap}
.phones{font-size:22px;color:#a5b0c8;margin-right:26px}
.tgroup{height:100%;display:flex;align-items:center;border-left:1px solid #4d6090}
.icons{gap:16px;padding:0 14px;margin-left:16px}
.icons svg{width:29px;height:34px}
.pages{padding:0 12px}
.pages a{width:26px;text-align:center;font-weight:500;line-height:24px}
.pages .on{color:#fff;text-decoration:underline}
.wins{padding-left:10px}
.wins button{width:37px;display:flex;justify-content:center}
.wins svg{width:24px;height:24px}

.dn,.tu,.td,.lf,.rt{display:inline-block;width:0;height:0;flex:none}
.dn{border:6px solid transparent;border-top:8px solid #555;border-bottom:0}
.dn.pale{border-top-color:#c5cde0}.dn.white{border-top-color:#fff}
.lf{border:6px solid transparent;border-right:8px solid #444;border-left:0}
.rt{border:6px solid transparent;border-left:8px solid #444;border-right:0}
.lf.faint{border-right-color:#bbb}.rt.pale{border-left-color:#ddd}
.tu{border:8px solid transparent;border-bottom:16px solid #d8401c;border-top:0}
.td{border:8px solid transparent;border-top:16px solid #1f4fb8;border-bottom:0}
.in{margin-left:8px}

.menu{height:39px;flex:none;display:flex;align-items:center;gap:24px;background:linear-gradient(#b9b9b9,#c9c8c5);border-bottom:2px solid #a5a5a5;color:#444;white-space:nowrap}
.menu a:first-child{margin-left:-4px}
.menu .hot{color:#c8402a}

.tools{height:71px;flex:none;display:flex;background:linear-gradient(#a4b0cd,#bcc6dc);border-top:1px solid #dde3ef;border-bottom:2px solid #858992;color:#3b4252;align-items:stretch}
.code-area{width:183px;padding:14px 0 0 6px;border-right:1px solid #cfd6e6}
.pill{width:164px;height:42px;border:3px solid #e8ebf2;border-radius:21px;background:#4d4b4e;display:flex;align-items:center;color:#e9e9e9}
.pill input{width:86px;padding-left:13px;color:#e8b53a;font:700 24px/26px var(--mono)}
.pill button{margin-left:12px}.pill svg{width:24px;height:24px}
.quick{padding:4px 4px 0 11px;width:376px}
.quick-icons{display:flex;gap:11px}
.quick-icons button{width:34px;height:36px;background:#f3f3f3;border-radius:5px;display:grid;place-items:center;overflow:hidden}
.quick-icons .tan{background:#d9a679}
.quick-icons svg{width:34px;height:34px}.quick-icons .cog{width:24px;height:24px;color:#5a6274}
.slots{display:flex;margin-top:6px;height:19px;border:1px solid #8f949c;background:#cfd0cf;font:600 16px/16px "Liberation Sans",sans-serif;text-align:center;width:364px}
.slots span{flex:1;border-right:1px solid #a8a8a8}
.tools>.lf{align-self:center;margin:0 4px 0 3px;border-right-color:#4c5a78}
.tool{width:77px;flex:none;border-left:1px solid #d3daea;text-align:left;padding-left:16px;line-height:31px;position:relative}
.tool:nth-last-child(2){border-right:1px solid #d3daea;width:78px}
.tool.wide{width:90px;padding-left:14px}
.tool.dark{color:#10141e}
.tool .dn{position:absolute;right:10px;top:30px}
.tool.more::after{content:"";position:absolute;right:2px;bottom:4px;border:5px solid transparent;border-right-color:#66708a;border-bottom-color:#66708a}
.clock{margin-left:auto;width:137px;border-left:1px solid #d3daea;color:#4e5462;font-family:var(--cond);overflow:hidden;white-space:nowrap}
.clock div{height:34px;display:flex;align-items:center;gap:9px;padding-left:15px;font-size:22px}
.clock div+div{border-top:2px solid #d5dcea}
.clock svg{width:28px;height:28px}

.workspace{flex:1;display:flex;min-height:0}
.mdi{flex:1;min-width:0;display:flex;flex-direction:column}
.top-windows{display:flex;height:703px;flex:none;padding-top:1px;gap:8px;align-items:flex-start}
.win{background:#d9d9d9;display:flex;flex-direction:column;overflow:hidden;border-right:4px solid #a2a5a9}
.wt{height:42px;flex:none;display:flex;align-items:center;background:linear-gradient(#94979b,#a2a5a9);color:#f2f2f2;white-space:nowrap}
.wt h2{font:22px/30px var(--mono)}
.num{width:22px;height:26px;border:2px solid #fff;border-radius:5px;background:#4a64a8;color:#fff;font:700 20px/22px "Liberation Sans",sans-serif;text-align:center;margin-right:10px}
.w1 .num,.chart .num{margin-left:-2px}
.w1 .num{margin-left:-14px}
.ctl{margin-left:auto;display:flex;align-items:center;color:#dcdcdc}
.ctl button{width:32px;display:grid;place-items:center;font-size:26px}
.ctl .serif{font:700 26px/26px "Liberation Serif",serif}
.ctl svg{width:23px;height:23px}
.ctl>i:not(.rt){width:2px;height:24px;background:#bdbfc2;margin:0 7px}
.ctl .rt{margin-right:10px}

.b{border:2px solid var(--line);background:linear-gradient(#f6f6f6,#e6e6e6);display:flex;align-items:center;justify-content:center;height:34px;flex:none;white-space:nowrap;gap:4px}
.b svg{width:24px;height:24px;color:#555}
.b .spk{width:36px}
.b.on{background:#4f7dc4;color:#fff;border-color:#4f7dc4}
.b.off,.offs .b,.off{color:#8a8a8a}
.w25{width:25px}.w32{width:32px}.w34{width:34px}.w48{width:48px}.w50{width:50px}.w54{width:54px}.w60{width:60px}.w64{width:64px}.w88{width:88px}.w94{width:94px}
.w140{width:140px}.w142{width:142px}.w151{width:151px}.w153{width:153px}.w156{width:156px}.w164{width:164px}.w232{width:232px}
.bar{display:flex;align-items:center}
.sq{width:12px;height:12px;background:#555;margin-right:8px}
.sel{appearance:none;height:34px;border:2px solid var(--line);padding-left:5px;color:#111;
 background:conic-gradient(from -35deg at 50% 100%,#555 70deg,transparent 0) no-repeat right 6px center/11px 9px,linear-gradient(#aaa,#aaa) no-repeat right 22px center/1px 100%,linear-gradient(#efefef,#efefef) no-repeat right/22px 100%,#fff}
.sel.off{background-color:#f0f0f0;color:#999;padding-left:12px;opacity:1}
.combo{height:34px;border:2px solid var(--line);background:#fff;display:flex;align-items:center;flex:none}
.combo input{flex:1;min-width:0;padding-left:4px;font:21px/24px var(--mono)}
.combo .dn{margin:0 7px}
.combo button{width:30px;height:30px;border-left:1px solid #aaa;background:#f3f3f3;display:grid;place-items:center}
.combo svg{width:24px;height:24px;color:#777}
.seg{display:flex}
.seg .b{width:33px;margin:0;border-right-width:0}.seg .b:last-child{border-right-width:2px;width:35px}
.sb{width:30px;flex:none;background:#f1f1f1;display:flex;flex-direction:column;align-items:center;padding:10px 0}
.thumb{width:26px;background:#cdcdcd;margin-top:10px}
.cu,.cd{width:11px;height:11px;border:solid #555;border-width:3px 0 0 3px;transform:rotate(45deg);flex:none;margin-top:4px}
.cd{transform:rotate(225deg);margin:auto 0 4px}
.t-tree{height:322px}.t-w1{height:240px}.t-w2{height:202px}.t-w3{height:125px;background:#bdbdbd}
.up{color:var(--red)}.dw{color:var(--blue)}.green{color:#2f8a35}
.sin{background:#206466;color:#fff;font-weight:400;display:inline-grid;place-items:center}

.w1{width:1069px;height:692px;border-bottom:6px solid #a5a5a5}
.w1-body{display:flex;flex:1;min-height:0}
.tree-wrap{width:305px;background:#fff;display:flex;overflow:hidden;border-right:2px solid #8a8a8a}
.tree{flex:1;height:660px;display:grid;grid-template-rows:repeat(27,1fr);list-style:none;padding-left:11px;font:21px/24px var(--mono);white-space:nowrap}
.tree li{position:relative;color:#111}
.tree li::before{content:"";position:absolute;left:-11px;top:12px;width:8px;border-top:2px dotted #999}
.tree .sub{padding-left:26px}
.tree .sub::before{left:9px;width:14px;height:24px;top:-12px;border-top:0;border-left:2px dotted #999;border-bottom:2px dotted #999}
.tree mark{background:#2878d0;color:#fff;margin-left:-4px;padding:0 2px;outline:1px dotted #a66;display:inline-block}
.w1-main{flex:1;padding:8px 2px 3px 10px;display:flex;flex-direction:column;min-width:0}
.w1-main .bar{gap:2px;margin-bottom:8px}
.code03{width:38px;height:34px;border:2px solid var(--line);background:linear-gradient(#2c7ad0,#2c7ad0) no-repeat center/26px 24px,#fff;color:#fff;text-align:center;font-family:var(--mono)}
.w1-main .sel{margin-right:1px}
.chk{display:flex;align-items:center;gap:4px;margin:0 6px 0 2px}
.chk input{appearance:none;width:23px;height:23px;border:2px solid #888;background:#fff}
.w1-main .nogap{margin-left:-1px}
.nums .b{width:61px}
.w1-main .nums .w34{width:35px}
.w1-main .nums .field{margin-left:auto}
.nums{padding-right:2px}
.w1-main .nums{margin-bottom:12px}
.tbl-wrap{flex:1;display:flex;border:2px solid #9a9a9a;background:#fff;min-height:0;overflow:hidden}
table{border-collapse:collapse;table-layout:fixed;flex:1;width:100%;height:100%}
th{font-weight:400;background:#e1e6f1;border-right:1px solid #c4c8d0;padding:0;text-align:center;white-space:nowrap;font-size:22px}
td{font:21px/24px var(--mono);height:31px;text-align:right;padding:0 3px 0 0;border-right:1px solid #cfcfcf;white-space:nowrap;overflow:hidden}
td.c{text-align:center;padding:0}
.t1 th{height:31px;background:#d9e0ee}
.t1 tbody tr:nth-child(even){background:#eee}
.t1 tbody .cur{background:#cfdcec}
.t1 .sin{width:22px;height:24px;font-size:20px}
td .tu,td .td{float:left;margin:4px 0 0 4px}
.mini{display:inline-block;width:6px;height:16px;border-left:2px solid #d8452a;background:linear-gradient(#d8452a,#d8452a) no-repeat center/100% 3px;vertical-align:middle}
.c31{width:31px}.c33{width:33px}.c113{width:113px}.c94{width:94px}.c105{width:105px}.c85{width:85px}.c125{width:125px}
.c54{width:54px}.c182{width:182px}.c149{width:149px}.c138{width:138px}.c88{width:88px}.c161{width:161px}.c136{width:136px}.c177{width:177px}

.w2{width:1247px;height:694px;border-bottom:8px solid #a5a5a5;border-left:4px solid #a2a5a9}
.w2-body{padding:10px 4px 3px 1px;flex:1;display:flex;flex-direction:column;min-height:0}
.w2 .num{margin-left:2px}
.tabs{display:flex;height:35px;border-bottom:2px solid #6f92c4;overflow:hidden;flex:none;align-items:stretch}
.tab{width:213px;border:1px solid #a5a5a5;border-width:1px 1px 0 0;color:#777;background:#dcdcdc;flex:none;font-size:22px}
.tab:first-child{width:217px}
.tab:nth-child(n+4){width:151px}
.tab.on{background:#f2f3f6;color:#111;border-color:#6f92c4}
.tab.last{width:auto;flex:1;text-align:left;padding-left:12px;overflow:hidden;white-space:nowrap}
.tabs .b{height:32px}
.radios{display:flex;margin-top:5px;gap:3px;flex:none;padding-left:2px}
fieldset{margin:0;min-width:0;padding:0 6px;height:35px;border:2px solid #b0b0b0;background:#f1f1f1;display:flex;align-items:center;justify-content:space-between;color:#111}
fieldset label{display:flex;align-items:center;gap:2px;white-space:nowrap}
fieldset input{appearance:none;width:22px;height:22px;border:2px solid #777;border-radius:50%;background:#fff}
fieldset input:checked{background:radial-gradient(#333 5px,#fff 6px)}
fieldset .dis{color:#999}fieldset .dis input{border-color:#aaa}fieldset .dis input:checked{background:radial-gradient(#888 5px,#fff 6px)}
.f269{width:269px}.f356{width:356px}.f440{width:440px}
.push{margin-left:auto}
.filters{display:flex;justify-content:space-between;margin-top:4px;flex:none;padding-left:2px;color:#555}
.filters label{display:flex;align-items:center;gap:6px}
.w2 .sel{color:#111}
.t2w{margin:8px 0 0 2px}
.t2 th{height:32px}
.t2 td:nth-child(2){text-align:left;padding-left:5px}
.t2 .g{background:#e8e8e8}.t2 .cur{background:#d2e6f2}

.w3{flex:1;height:702px;border-left:4px solid #a2a5a9;border-right-width:6px;min-width:0;margin-right:8px}
.w3 .num{margin-left:3px}
.w3-body{padding:6px 12px 0 8px;flex:1;display:flex;flex-direction:column;min-height:0}
.w3-body .bar{gap:5px}
.w3-body .b,.w3-body .combo,.w3-body .stock{height:37px}
.stock{display:flex;align-items:center;background:#fff;border:2px solid var(--line);flex:1;height:34px}
.stock .sin{height:100%;width:48px}
.stock .pct{width:85px;height:100%;display:grid;place-items:center;background:#d9d9d9;font-family:var(--mono)}
.stock .nm{color:#8e1f4e;padding-left:5px}
.quote{margin-top:9px;border:2px solid #9f9f9f;border-bottom:0;background:#fff;flex:1;min-height:0;display:flex;flex-direction:column;font:21px/26px var(--mono);overflow:hidden}
.q1,.q2{display:grid;height:27px;border-bottom:2px solid #aaa;flex:none}
.q1{grid-template-columns:232px 164px 156px 194px 1fr}
.q2{grid-template-columns:177px 183px 185px 198px 1fr}
.r{text-align:right;padding-right:3px}.l{padding-left:9px}
.q2 .l{border-left:1px solid #bbb;padding-left:6px;margin-left:2px}
.chg{background:#f2f2f2;text-align:center;font-size:22px}
.q2 .ask{background:#e2eff3}.q2 .bid{background:#fbe3da}
.asks{display:flex;height:298px;flex:none;border-bottom:2px solid #aaa}
.ask-q,.ask-p{display:grid;grid-template-rows:repeat(10,1fr);text-align:right;line-height:28px}
.ask-q{width:357px;background:linear-gradient(#c2c2c2,#c2c2c2) no-repeat 177px 0/1px 100%,linear-gradient(#b5b5b5,#b5b5b5) no-repeat 0 148px/100% 2px}
.ask-q span{padding-right:2px;background:linear-gradient(#e6eaf8,#e6eaf8) no-repeat right center/var(--w) 26px}
.ask-p{width:183px;background:linear-gradient(#b5b5b5,#b5b5b5) no-repeat 0 148px/100% 2px,linear-gradient(#cfe2e8 20%,#e6f0f4 60%,#fbfdfe);color:var(--red);border-right:1px solid #aaa;border-left:1px solid #bbb}
.ask-p span,.bid-p span{padding-right:4px}
.ask-p .now{border:2px solid #c8402a;background:#fff;line-height:26px;padding-right:2px}
.day{width:22px;border-right:2px solid #aaa}
.day svg{width:20px;height:295px}
.facts{flex:1;display:grid;grid-template-columns:198px 1fr;grid-auto-rows:26px;background:#fcfdff;padding-top:1px;line-height:26px;align-content:start}
.facts dd{text-align:right}.facts dt{padding-left:9px}
.facts .mk{grid-column:1/3;text-align:center;padding:0}
.facts .sep{border-top:2px solid #bbb;margin-top:4px}
.facts dt.sep,.facts dd.sep{height:30px}
.facts .sep~dd,.facts .sep~dt:not(.sep){margin-top:6px}
.facts .diff{grid-column:1/3;display:flex;justify-content:space-between;padding:0 61px 0 10px}
.side{width:46px;display:grid;grid-template-rows:repeat(8,1fr);flex:none}
.side button{border:1px solid #999;border-width:0 0 2px 2px;background:#ececec;font:22px/24px var(--ui)}
.bids{display:flex;height:279px;flex:none}
.ticks,.bid-p,.bid-q{display:grid;grid-template-rows:repeat(9,31px)}
.ticks{width:326px;color:var(--red);line-height:31px}
.ticks div{display:grid;grid-template-columns:150px 1fr;text-align:right;padding-right:4px;background:repeating-linear-gradient(#bbb 0 1px,#fff 1px 5px) no-repeat 153px 0/21px 100%}
.ticks .g{background-color:#e6e6e6}
.bids .sb{padding-top:6px}
.bid-p{width:184px;text-align:right;line-height:31px;color:var(--red);border:1px solid #aaa;border-width:0 1px;background:linear-gradient(#b5b5b5,#b5b5b5) no-repeat 0 153px/100% 2px,linear-gradient(#fff,#f8d6ca 90%)}
.bid-p .k{color:#111}.bid-p .dw{color:var(--blue)}
.bid-q{flex:1;line-height:31px;background:linear-gradient(#c8c8c8,#c8c8c8) no-repeat 177px 0/1px 100%,linear-gradient(#b5b5b5,#b5b5b5) no-repeat 0 153px/100% 1px}
.bid-q span{padding-right:184px;text-align:right;background:linear-gradient(#fbe6e0,#fbe6e0) no-repeat left center/var(--w) 28px}

.chart{flex:1;min-height:0;margin-right:14px;border:0}
.chart .wt{height:43px;background:#45609a;margin-top:1px;color:#f4f6fb}
.chart .num{border-color:#cdd8ee;margin-right:8px}
.chart .ctl{padding-right:6px}
.chart-body{padding:10px 14px 0 0;flex:1;display:flex;flex-direction:column;min-height:0}
.chart .bar{gap:5px;height:34px;flex:none;padding-left:1px}
.chart .w54{padding-left:3px}
.chart .sel.w64{margin-left:-1px}
.stock.small{flex:none;width:141px}
.stock.small .sin{width:30px}
.seg .b{font-size:22px}
.offs .b{font:21px/24px var(--mono)}
.count{display:flex;align-items:center;font:21px/24px var(--mono);gap:2px;margin-left:-3px}
.count input{width:56px;height:34px;border:2px solid var(--line);background:#fff;text-align:right;padding-right:5px}
.plain{width:29px}.plain svg{width:24px;height:24px;color:#555}
.date{width:118px;height:34px;border:2px solid var(--line);background:#fff;padding-left:5px;font:22px/24px var(--cond)}
.info{display:flex;margin-top:7px;height:33px;flex:none;gap:4px}
.info-box{border:2px solid #b0b0b0;background:#f2f2f2;display:flex;align-items:center;font:21px/29px var(--mono);text-align:right;width:1312px}
.info-box span{flex:none;white-space:nowrap;padding-right:5px}
.ln{border-left:1px solid #bbb}
.i36{width:36px}.i70{width:69px}.i74{width:74px}.i77{width:77px}.i84{width:84px}.i88{width:88px}.i101{width:101px}.i127{width:127px}.i130{width:130px}.i142{width:142px}
.info .buy{width:68px;background:#f6d5cc}.info .sell{width:68px;background:#cfe0f4}
#plot{width:100%;margin-top:6px;font:22px var(--cond)}
.scroll{height:23px;flex:none;display:flex;align-items:center;background:#e4e4e4;border-top:2px solid #aaa}
.lf.blk{margin:0 10px 0 8px;border-right-color:#111}
.track{flex:1;border-left:2px solid #777;height:100%}
.scroll svg{width:660px;height:22px}
.dockbar{height:15px;flex:none;display:flex;overflow:hidden;background:#cfcfcf;border-top:2px solid #b8b8b8;line-height:22px;gap:1px;color:#222}
.dockbar span{white-space:nowrap;padding:3px 0 0 8px;height:30px;flex:none}
.d-ctl{width:378px;margin-left:36px;background:repeating-linear-gradient(90deg,#ddd 0 128px,#888 128px 130px)}
.dockbar .sin{width:28px;height:20px;margin-top:4px}
.d-name{width:168px;background:#ddd;color:#8e1f4e}
.d-red{width:522px;background:#eab8b0}.d-blue{width:524px;background:#b4cbe0}.d-green{width:522px;background:#c5cdb0}.d-tan{width:522px;background:#d8c8a8}
.dockbar .d-green{padding-left:60px}.dockbar .d-tan{padding-left:124px}

.palette{width:44px;flex:none;background:#f0f0f0;overflow:hidden;display:flex;flex-direction:column;border-left:1px solid #fff}
.draw{padding:16px 0 0 7px;display:grid;grid-template-rows:repeat(21,1fr);height:1113px;flex:none}
.draw button{width:46px;height:42px;border:2px solid #a5a5a5;background:#efefef;position:relative;overflow:hidden;justify-self:start}
.draw svg{position:absolute;left:0;top:0;width:40px;height:38px}
.draw span{position:absolute;left:6px;top:0;font:700 24px/26px "Liberation Serif",serif;color:#2a3f80}
.draw small{position:absolute;left:1px;bottom:0;font:700 15px/15px "Liberation Sans",sans-serif;color:#2a3f80}
.pen{height:68px;flex:none;border-top:2px solid #bbb;position:relative}
.pen svg{position:absolute;left:-2px;top:0;width:60px;height:60px}
.marker{flex:1;border:solid #000;border-width:3px 0 0 4px;background:#fff;display:flex;flex-direction:column}
.marker button{height:53px;flex:none;display:block;width:100%;overflow:hidden}
.marker svg{width:40px;height:52px}
.blue{background:#3f9ad8}.gold{background:#edc23c}.ink{background:#5a5a5a}
.marker .blue{background:#3f9ad8}.marker .gold{background:#edc23c}.marker .ink{background:#5a5a5a}
.swatches{display:grid;grid-template-columns:26px 1fr;flex:1;grid-template-rows:28px 1fr;border-top:3px solid #000}
.swatches i:nth-child(1){background:#5a9ad8}.swatches i:nth-child(2){background:#e8d840}.swatches i:nth-child(3){background:#f04a98}.swatches i:nth-child(4){background:#000}

.shade{position:absolute;inset:1150px 0 0;pointer-events:none;background:linear-gradient(rgba(0,0,0,0),rgba(0,0,0,.03) 19%,rgba(0,0,0,.08) 39%,rgba(0,0,0,.145) 58%,rgba(0,0,0,.24) 91%,rgba(0,0,0,.28))}
.subscribe{position:absolute;right:30px;bottom:5px;width:78px;height:78px;border-radius:50%;background:rgba(62,142,200,.88);color:#fff;font-weight:700;font-size:28px;line-height:29px;text-align:center;padding-top:10px}
```
FILE: chart.js
```js
// Daily candles: "up/down, body top, body bottom, high, low" in plot units.
const candles = `b1470,1483,1450,1489 r1472,1477,1458,1480 r1438,1473,1438,1479 b1451,1464,1451,1464 r1324,1463,1324,1463 b1300,1319,1249,1326 r1322,1335,1286,1345 r1279,1330,1155,1331 r1264,1267,1185,1285 b1217,1249,1190,1277 b1255,1296,1231,1296 r1262,1281,1213,1298 r1231,1249,1220,1272 b1236,1244,1225,1256 b1242,1291,1239,1293 r1251,1265,1196,1267 b1259,1277,1232,1286 r1258,1272,1211,1277 r1244,1256,1239,1266 b1225,1256,1222,1258 b1252,1272,1246,1298 b1269,1315,1264,1319 b1306,1330,1306,1342 r1322,1337,1274,1349 b1313,1337,1304,1337 r1330,1338,1307,1338 r1318,1331,1316,1340 r1300,1317,1264,1322 b1279,1311,1262,1315 b1307,1335,1286,1353 b1339,1367,1330,1383 b1363,1394,1346,1398 r1387,1402,1371,1402 b1388,1402,1379,1417 b1409,1426,1396,1426 r1420,1434,1404,1443 b1419,1458,1403,1458 r1470,1471,1432,1497 r1451,1463,1430,1463 b1428,1437,1410,1446 r1426,1434,1404,1434 r1418,1425,1414,1426 r1339,1415,1280,1419 r1330,1332,1328,1356 r1346,1354,1338,1369 r1330,1339,1283,1344 b1321,1331,1307,1331 b1330,1351,1320,1354 r1339,1340,1307,1349 b1339,1354,1329,1357 b1365,1369,1354,1384 b1345,1361,1343,1365 r1325,1350,1307,1354 b1325,1342,1319,1344 b1322,1327,1322,1340 b1326,1352,1321,1381 b1348,1356,1329,1356 r1339,1358,1329,1361 r1301,1333,1277,1333 b1290,1305,1274,1305 b1306,1326,1306,1330 r1313,1322,1304,1327 b1313,1314,1304,1321 b1304,1321,1295,1321 b1325,1340,1322,1349 b1346,1358,1343,1366 r1329,1354,1322,1354 b1332,1344,1327,1349 r1327,1344,1319,1344 r1331,1333,1321,1342 b1323,1356,1318,1356 b1353,1358,1340,1365 b1362,1364,1349,1370 b1369,1379,1363,1389 r1370,1379,1352,1379 r1374,1380,1366,1381 b1374,1387,1372,1394 b1387,1389,1367,1393 r1380,1394,1372,1402 r1378,1382,1363,1391 r1360,1375,1359,1391 b1364,1376,1364,1376 b1378,1385,1372,1389 r1379,1384,1372,1385 b1378,1384,1375,1387 b1381,1394,1379,1396 b1396,1429,1392,1431 r1421,1429,1421,1445 b1418,1441,1418,1441 r1433,1449,1424,1452 b1427,1441,1427,1441 r1437,1447,1429,1448 r1395,1427,1323,1428 b1402,1414,1394,1416 r1390,1404,1339,1407 r1378,1393,1362,1398 b1363,1374,1357,1382 b1365,1380,1357,1383 b1378,1380,1362,1383 b1378,1398,1369,1400 b1390,1401,1380,1402 b1397,1412,1397,1415 r1403,1410,1392,1415 b1399,1417,1398,1419 b1418,1424,1411,1426 r1412,1423,1410,1424 r1400,1417,1395,1418 b1403,1404,1388,1407 b1400,1422,1400,1424 b1428,1434,1411,1436 b1433,1445,1426,1447 r1428,1445,1421,1445 r1427,1430,1424,1433 b1426,1440,1424,1445 b1440,1441,1426,1441 b1440,1450,1351,1450 b1451,1480,1451,1482 r1477,1490,1474,1501 b1491,1494,1472,1496 r1481,1493,1432,1493 r1469,1482,1449,1482 r1468,1470,1451,1470 r1468,1475,1459,1476`
  .split(' ').map(s => ({ up: s[0] === 'r', v: s.slice(1).split(',').map(Number) }));

const volumes = [9,9,13,9,131,89,38,135,59,38,15,41,23,11,9,38,11,30,11,11,7,7,9,17,8,8,5,28,17,9,7,7,5,5,5,5,5,5,5,5,7,5,61,14,9,41,11,7,17,5,5,8,23,5,5,5,8,8,37,21,7,9,5,7,5,5,7,5,8,5,7,3,3,3,3,3,3,3,5,5,5,3,3,3,3,3,3,3,3,5,3,3,58,8,39,8,8,5,5,5,5,3,3,3,3,3,3,3,3,3,3,3,3,3,3,25,5,5,5,16,5,5,3];
const volumeUp = new Set([1,2,4,7,11,15,17,19,22,23,27,31,35,37,38,39,42,45,48,51,52,55,56,57,58,61,63,66,68,70,73,74,78,79,80,84,85,89,92,94,105,115,119]);

const averages = [
  ['#7d7d7d', 2, '15,1600 116,1591 191,1581 281,1566 318,1560 449,1539 652,1511 849,1488 1003,1476 1121,1462 1247,1446 1374,1433 1486,1420 1577,1409 1773,1396 1900,1395 2200,1392 2300,1390 2406,1386 2506,1382 2627,1375 2698,1374 2826,1370 3062,1370'],
  ['#3f8a58', 2, '15,1493 116,1478 210,1462 421,1438 666,1420 758,1410 849,1405 982,1398 1100,1386 1212,1374 1296,1365 1381,1354 1521,1339 1591,1333 1773,1338 1830,1344 1942,1352 2082,1360 2200,1366 2328,1372 2470,1365 2570,1365 2712,1374 2819,1380 2926,1386 3062,1403'],
  ['#d9a83c', 4, '15,1510 91,1498 116,1485 175,1462 270,1423 340,1379 449,1326 512,1303 589,1280 659,1281 730,1288 765,1292 807,1304 884,1327 982,1367 1035,1381 1100,1382 1142,1383 1219,1387 1286,1386 1346,1379 1402,1371 1479,1351 1535,1336 1598,1333 1773,1331 1935,1342 2047,1359 2145,1369 2200,1379 2293,1397 2478,1399 2613,1407 2691,1404 2784,1405 2848,1409 2919,1421 2990,1434 3062,1444'],
  ['#2b3f8e', 2, '15,1505 88,1481 102,1468 126,1450 168,1422 238,1361 309,1305 340,1280 379,1272 421,1262 519,1261 582,1278 645,1295 723,1311 765,1329 817,1341 887,1365 947,1400 1003,1422 1045,1426 1100,1413 1142,1399 1212,1365 1275,1348 1367,1343 1451,1345 1521,1330 1577,1325 1633,1326 1668,1324 1703,1326 1773,1336 1865,1352 1914,1358 1984,1373 2124,1377 2200,1391 2293,1415 2389,1418 2478,1400 2542,1392 2599,1393 2684,1403 2755,1414 2883,1428 2954,1451 3062,1467'],
  ['#b04fa6', 2, '15,1478 60,1474 100,1455 126,1422 161,1375 210,1307 238,1288 281,1278 309,1264 339,1257 379,1260 460,1265 491,1258 516,1261 561,1278 610,1311 638,1326 673,1323 726,1320 765,1327 807,1355 863,1396 912,1418 965,1444 1014,1448 1045,1436 1091,1389 1107,1377 1163,1336 1251,1344 1289,1352 1388,1342 1451,1345 1507,1315 1584,1313 1640,1329 1731,1331 1787,1340 1861,1366 1935,1379 2012,1377 2117,1376 2166,1393 2200,1406 2221,1418 2271,1433 2342,1425 2406,1391 2463,1380 2513,1385 2584,1404 2641,1413 2712,1411 2784,1427 2841,1436 2883,1437 2947,1462 2997,1477 3062,1475'],
];
const volumeAverages = [
  ['#858585', 3, '15,1846 250,1842 900,1840 1120,1838 1680,1838 1750,1841 1925,1843 2640,1842 2750,1844 3062,1846'],
  ['#4c8a5c', 3, '15,1840 200,1836 1120,1837 1400,1837 1600,1840 1780,1846 1925,1849 2800,1849 3062,1852'],
  ['#dbb463', 3, '15,1840 95,1838 137,1828 170,1828 190,1824 240,1822 265,1822 290,1819 400,1819 405,1821 590,1821 620,1830 690,1838 700,1842 780,1843 860,1846 930,1849 1050,1847 1400,1846 1500,1842 1600,1847 1800,1851 2290,1853 2400,1849 2780,1849 2900,1852 3062,1854'],
  ['#a8559c', 2, '15,1839 90,1847 116,1820 143,1805 164,1801 185,1778 212,1767 249,1790 265,1799 291,1799 318,1823 360,1838 392,1835 445,1841 508,1843 582,1849 667,1849 699,1845 762,1845 847,1852 953,1853 1043,1852 1069,1838 1122,1837 1149,1831 1165,1833 1186,1842 1239,1843 1260,1849 1440,1849 1482,1843 1567,1843 1609,1849 1660,1851 1900,1853 2290,1854 2313,1845 2345,1841 2370,1835 2415,1835 2440,1845 2490,1850 2530,1854 2870,1854 2950,1852 2985,1846 3020,1850 3062,1850'],
];

const RED = '#e0431f', BLUE = '#2160c8';
const x = i => Math.round(15 + i * 24.975);
const rect = (a, b, w, h, fill, more = '') => `<rect x="${a}" y="${b}" width="${w}" height="${h}" fill="${fill}" ${more}/>`;
const line = (a, b, c, d, stroke, w = 2) => `<path d="M${a} ${b}L${c} ${d}" stroke="${stroke}" stroke-width="${w}"/>`;
const text = (a, b, s, fill, size = 22, more = '') => `<text x="${a}" y="${b}" fill="${fill}" font-size="${size}" ${more}>${s}</text>`;
const poly = ([c, w, p]) => `<polyline points="${p}" fill="none" stroke="${c}" stroke-width="${w}"/>`;
let out = '';

// Panes, axis and grid
out += rect(0, 1061, 3130, 800, '#fff') + rect(3130, 1061, 114, 830, '#dbe6f6') + rect(0, 1860, 3130, 31, '#d6deec');
[1131, 1185, 1240, 1294, 1348, 1402, 1457, 1511, 1565, 1619, 1673].forEach((y, i) => {
  out += line(0, y, 3128, y, '#d8d8d8');
  out += line(3130, y, 3140, y, '#777');
  out += text(3144, y + 6, (7500 - i * 500).toLocaleString('en-US'), '#5a5f68');
  for (let k = -4; k < 0; k++) out += line(3130, y + k * 11, 3134, y + k * 11, '#888');
});
out += line(0, 1786, 3128, 1786, '#d8d8d8') + line(3130, 1786, 3140, 1786, '#777');
for (let y = 1730; y < 1850; y += 14) out += line(3130, y, 3134, y, '#888');
[278, 852, 1376, 1851, 2376, 2900].forEach((gx, i) => {
  out += line(gx, 1062, gx, 1860, '#d2d2d2') + line(gx, 1860, gx, 1890, '#888');
  out += text(gx + 3, 1881, ['07', '08', '09', '10', '11', '12'][i], '#5a6070');
});
out += text(4, 1881, '2019/06', '#5a6070') + text(3146, 1881, '12/10', '#5a6070');
out += line(0, 1062, 3244, 1062, '#999') + line(0, 1698, 3244, 1698, '#999', 3) + line(0, 1859, 3244, 1859, '#999')
  + line(3130, 1062, 3130, 1890, '#999') + line(1, 1062, 1, 1890, '#aaa') + line(3243, 1062, 3243, 1890, '#999');

// Volume pane
volumes.forEach((h, i) => { out += rect(x(i) - 11, 1857 - h, 22, h, volumeUp.has(i) ? RED : BLUE); });
out += volumeAverages.map(poly).join('');
out += text(8, 1745, '279,206주(42,85%)', '#444');

// Price pane
out += averages.map(poly).join('');
candles.forEach(({ up, v: [t, b, hi, lo] }, i) => {
  const c = up ? RED : BLUE;
  out += line(x(i), hi, x(i), lo, up ? '#b8412a' : '#3a5ea8') + rect(x(i) - 11, t, 22, Math.max(2, b - t), c);
});
[[15, 1249], [45, 1328], [75, 1372], [105, 1411], [120, 1467]].forEach(([i, y]) => { out += rect(x(i) - 6, y, 12, 4, '#111') + rect(x(i) - 6, y + 4, 12, 8, '#62c4d0'); });
[[0, 1480], [30, 1362], [60, 1326], [90, 1434]].forEach(([i, y]) => { out += rect(x(i) - 6, y, 12, 5, '#c8a060') + rect(x(i) - 6, y + 5, 12, 5, '#111'); });
out += line(0, 1300, 3127, 1300, '#e0823a', 7) + line(0, 1466, 3127, 1466, '#e0823a', 7);
out += text(5, 1293, '5,931', '#d9924a') + text(5, 1460, '4,401', '#d9924a');
out += `<path d="M115 1481l14 13h-8v18h-12v-18h-8z" fill="#e0351f"/>`;
out += `<path d="M202 1162l10-9v18zM212 1161h14v2h-14z" fill="#d8301c"/>` + text(226, 1169, '최고 7,260 (06/25)', '#c63a28', 23);
out += `<path d="M2926 1497l-11-9v18zM2900 1496h15v2h-15z" fill="#1f2fc0"/>` + text(2717, 1504, '최저 4,100 (12/03)', '#2b35a8', 23);

// Legends
const dot = a => rect(a, 1071, 7, 12, '#ccc', 'stroke="#777" stroke-width="2"');
out += dot(8) + dot(131) + dot(418) + dot(509) + rect(20, 1064, 102, 26, '#eee', 'stroke="#aaa"');
out += text(29, 1086, '로보로보', '#222') + text(150, 1086, '종가 단순 5', '#b04fa6', 23) + text(273, 1086, '10', '#2b3fa0') + text(307, 1086, '20', '#d9a83c') + text(341, 1086, '60', '#3f8a58') + text(376, 1086, '120', '#7d7d7d') + text(436, 1086, '상한가', '#c6301c', 23) + text(526, 1086, '하한가', '#2633c0', 23);
out += rect(11, 1097, 23, 22, '#fff', 'stroke="#222" stroke-width="2"') + `<path d="M15 1101h15v14H15zM15 1106h15M15 1111h15M20 1101v14M25 1101v14" fill="none" stroke="#888"/>`;
out += rect(9, 1708, 6, 11, '#ccc', 'stroke="#777" stroke-width="2"') + text(26, 1722, '거래량', '#35909c') + text(103, 1722, '단순 5', '#b04fa6') + text(178, 1722, '20', '#d9a83c') + text(212, 1722, '60', '#3f8a58') + text(249, 1722, '120', '#7d7d7d');

// Axis tags
out += text(3132, 1083, 'LC:7,56', '#c63a28') + text(3132, 1104, 'HC:-39,26', '#2f64c0');
out += rect(3138, 1453, 101, 23, '#e0401c') + text(3144, 1472, '4,410', '#fff') + text(3144, 1493, '0,68%', '#c63a28');
out += text(3144, 1792, '20,000K', '#5a5f68') + rect(3138, 1813, 101, 23, '#2560c8') + text(3144, 1832, '279,206', '#dfe8ff') + text(3144, 1855, '42,85%', '#2f64c0');
out += rect(3225, 1704, 15, 13, '#445') + `<path d="M3229 1707l7 7M3236 1707l-7 7" stroke="#fff"/>`;

// Pen strokes
const pen = d => `<path d="${d}" fill="none" stroke="#e84a96" stroke-width="8" stroke-linecap="round" stroke-linejoin="round"/>`;
out += pen('M1030 1493L979 1494 965 1485 948 1470 944 1450 951 1434 965 1420 989 1416 1010 1410 1024 1412 1045 1424 1058 1442 1061 1462 1052 1472 1017 1485 1000 1491');
out += pen('M1489 1328L1510 1326 1524 1317 1528 1304 1524 1290 1523 1276 1507 1270H1430L1417 1286 1414 1304 1430 1319 1447 1331 1461 1338H1503L1507 1332');
out += pen('M2195 1430L2204 1425 2243 1422 2293 1424 2317 1432 2346 1438 2346 1451 2332 1462 2300 1471 2285 1482 2264 1486 2250 1478 2221 1471 2203 1462 2195 1445z');
out += pen('M2431 1304L2463 1299 2470 1294 2492 1294 2512 1299 2512 1315 2506 1328 2485 1334 2463 1339 2442 1336 2435 1328 2431 1315z');

// Pencil cursor
out += `<g fill="#f4f4f4" stroke="#222" stroke-width="2"><path d="M2329 1595l14 2 25 22-1 10-8 6-22-18-8-10z"/><path d="M2337 1612l7-13M2339 1608l24 22M2345 1604l22 19" fill="none"/><path d="M2329 1595l8 1-7 7z" fill="#000"/></g>`;
document.getElementById('plot').innerHTML = out;
```
